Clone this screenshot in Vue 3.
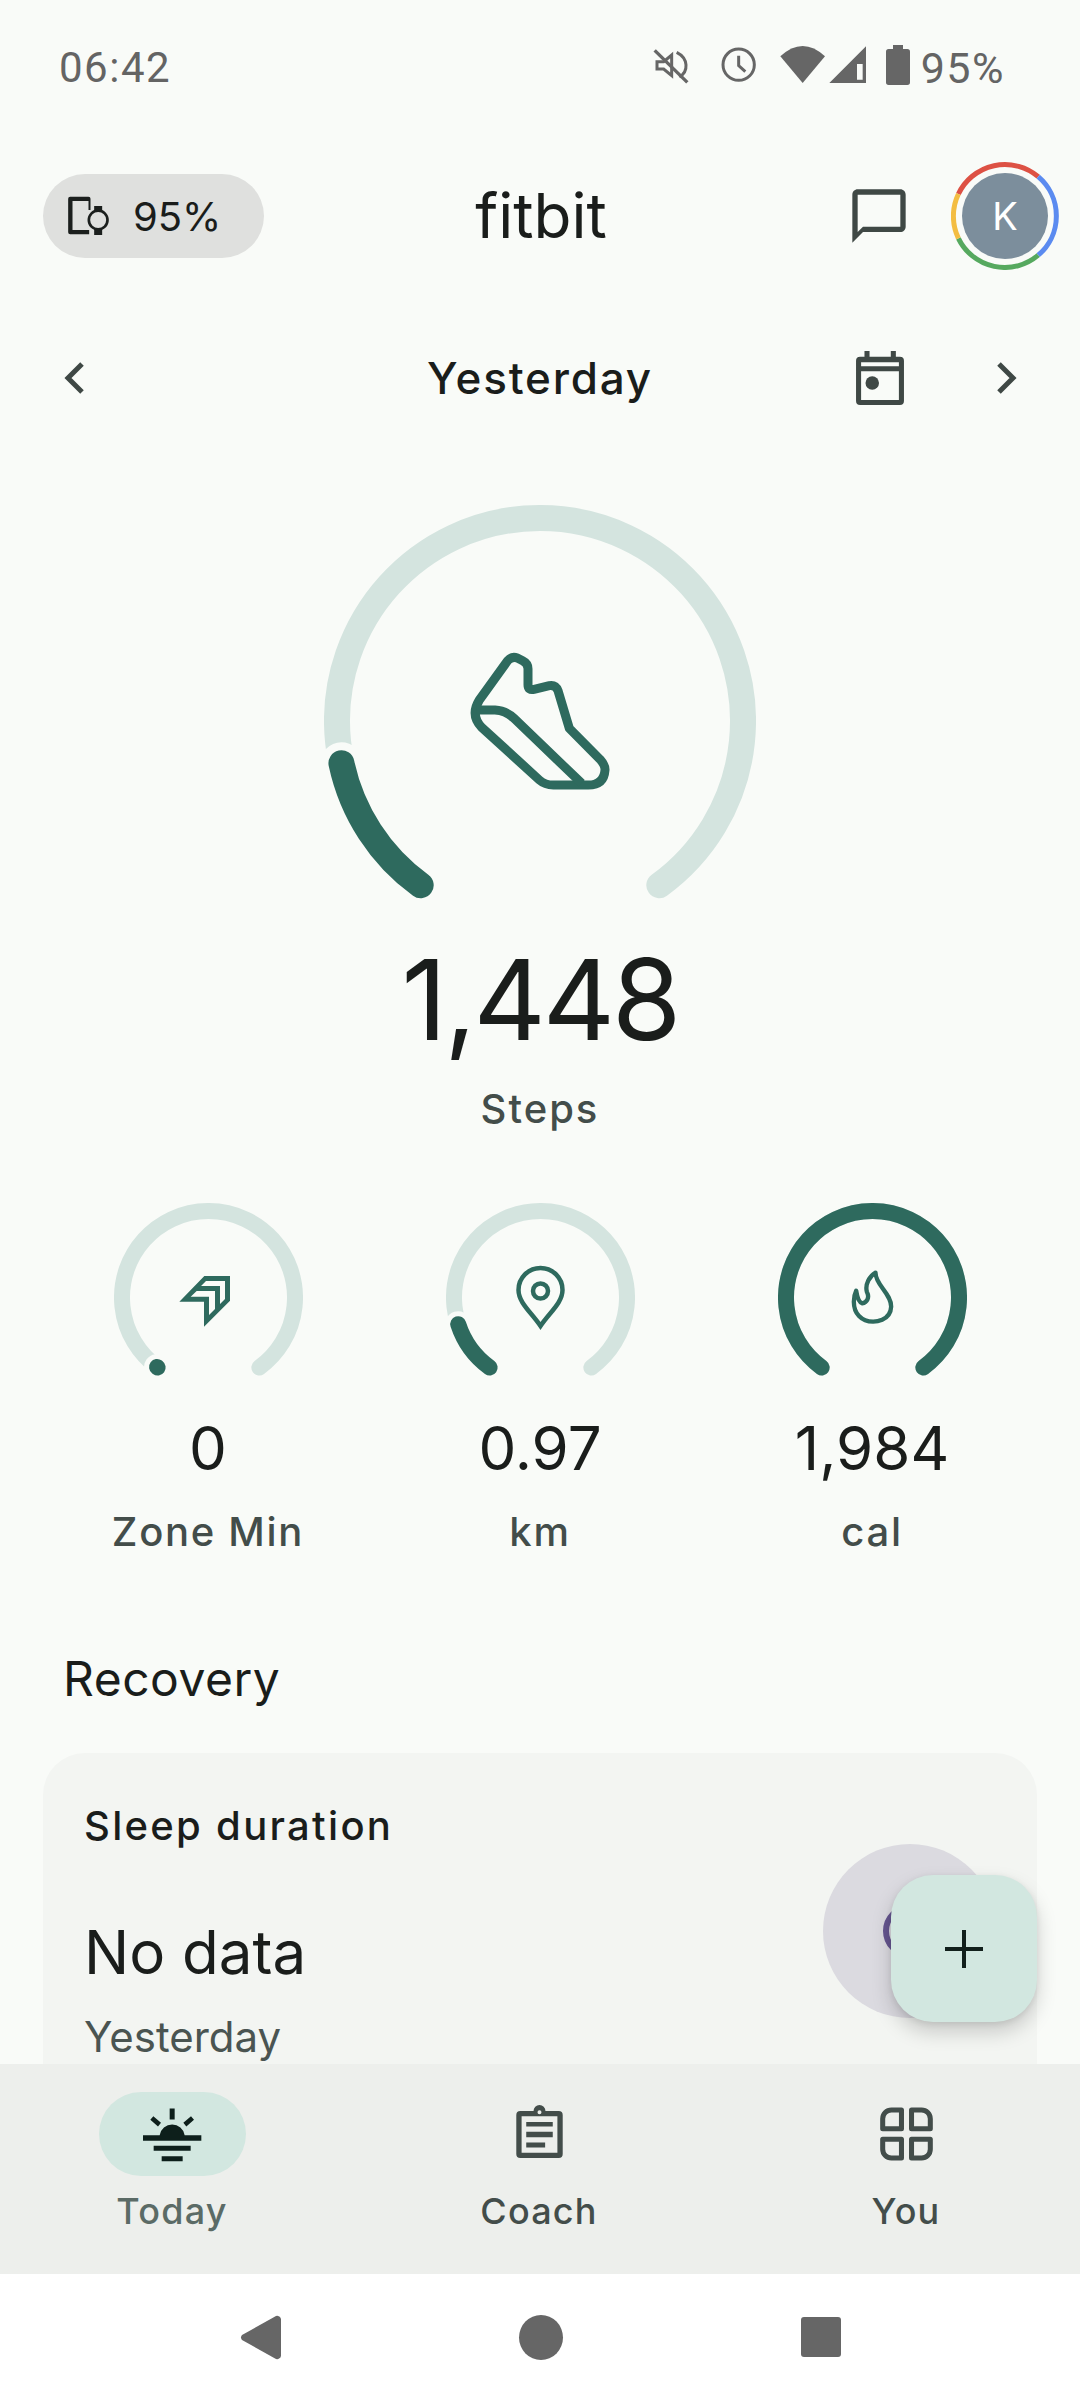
<template>
  <div class="app">
    <main class="main">
      <!-- status bar -->
      <div class="status">
        <span class="time">06:42</span>
        <div class="status-right">
          <svg class="status-icons" width="280" height="60" viewBox="60 60 840 180">
            <g fill="none" stroke="#666" stroke-width="9">
              <path d="M108 128h20l24-20v62l-24-20h-20z" />
              <path d="M167 100c36 18 36 58 8 74" />
              <path d="M101 94l98 96" stroke-width="10" />
              <circle cx="353" cy="137" r="47" />
              <path d="M353 110v30l20 18" />
            </g>
            <g fill="#666">
              <path d="M478 112Q545 50 612 112L545 192z" />
              <path d="M625 192L735 82V192zM708 182h17V135h-17z" fill-rule="evenodd" />
              <path d="M816 78h30v12h13a8 8 0 0 1 8 8v92a8 8 0 0 1-8 8h-56a8 8 0 0 1-8-8V98a8 8 0 0 1 8-8h13z" />
            </g>
          </svg>
          <span class="time pct">95%</span>
        </div>
      </div>

      <!-- app bar -->
      <div class="topbar">
        <div class="left">
          <div class="device">
            <svg width="42" height="40" viewBox="55 50 125 120" fill="#1b1f1d">
              <path d="M61 52h55a6 6 0 0 1 6 6v34h-6V65H68v87h50v13H61a6 6 0 0 1-6-6V58a6 6 0 0 1 6-6z" />
              <path d="M133 80h24v17h-24zM133 148h24v19h-24z" />
              <circle cx="145" cy="122" r="28" fill="none" stroke="#1b1f1d" stroke-width="8" />
            </svg>
            <span>95%</span>
          </div>
        </div>
        <div class="logo">fitbit</div>
        <div class="right">
          <svg width="64" height="64" viewBox="0 0 24 24" fill="#3f4845">
            <path d="M20 2H4c-1.1 0-2 .9-2 2v18l4-4h14c1.1 0 2-.9 2-2V4c0-1.1-.9-2-2-2zm0 14H6l-2 2V4h16v12z" />
          </svg>
          <div class="avatar">
            <svg class="ring" width="108" height="108" viewBox="0 0 108 108" fill="none" stroke-width="5">
              <path d="M7.4 32A51.5 51.5 0 0 1 87.2 14.700" stroke="#dd5144" />
              <path d="M87.200 14.700A51.5 51.500 0 0 1 87.200 93.200" stroke="#5b8bf0" />
              <path d="M87.200 93.200A51.5 51.500 0 0 1 7.400 76.300" stroke="#56a95f" />
              <path d="M7.400 76.300A51.5 51.500 0 0 1 7.400 32" stroke="#f3bd42" />
            </svg>
            <span class="initial">K</span>
          </div>
        </div>
      </div>

      <!-- date row -->
      <div class="daterow">
        <div class="left date-left">
          <svg width="22" height="34" viewBox="0 0 22 34" fill="none" stroke="#3f4845" stroke-width="5">
            <path d="M19 3L5 17l14 14" />
          </svg>
        </div>
        <div class="date">Yesterday</div>
        <div class="right date-right">
          <svg width="48" height="54" viewBox="50 545 142 160" fill="#3f4845">
            <path d="M75 545h15v17h63v-17h15v17h12a12 12 0 0 1 12 12v119a12 12 0 0 1-12 12H62a12 12 0 0 1-12-12V574a12 12 0 0 1 12-12h13zM65 578v12h112v-12zM65 605v85h112v-85z" fill-rule="evenodd" />
            <circle cx="98" cy="640" r="20" />
          </svg>
          <svg width="22" height="34" viewBox="0 0 22 34" fill="none" stroke="#3f4845" stroke-width="5">
            <path d="M3 3l14 14L3 31" />
          </svg>
        </div>
      </div>

      <!-- steps gauge -->
      <div class="hero">
        <svg class="hero-gauge" width="432" height="400" viewBox="0 0 432 400" fill="none">
          <path :d="arc(216, 216, 203, 36, 324)" class="track" stroke-width="26" />
          <path :d="arc(216, 216, 203, 36, 78)" class="halo" stroke-width="42" />
          <path :d="arc(216, 216, 203, 36, 78)" class="bar" stroke-width="26" />
          <svg x="116" y="115" width="200" height="200" viewBox="0 0 600 600">
            <path class="shoe" d="M203 122Q215 108 232 114L248 122Q264 130 264 146V195Q264 212 282 208L328 197Q347 194 354 212L388 325L480 418Q496 436 495 450Q492 495 445 495H340Q315 495 298 480L125 322Q90 285 118 240Z" />
            <path class="shoe" d="M110 270H165Q198 272 222 295L425 490" />
          </svg>
        </svg>
        <div class="steps">1,448</div>
        <div class="steps-label">Steps</div>
      </div>

      <!-- three small gauges -->
      <div class="metrics">
        <div v-for="m in metrics" :key="m.label" class="metric">
          <svg class="metric-gauge" width="189" height="180" viewBox="0 0 189 180" fill="none">
            <path :d="arc(94.5, 94.5, 86.5, 36, 324)" class="track" stroke-width="16" />
            <template v-if="m.to < 324">
              <path :d="arc(94.5, 94.5, 86.5, 36, m.to)" class="halo" stroke-width="26" />
            </template>
            <path :d="arc(94.5, 94.5, 86.5, 36, m.to)" class="bar" stroke-width="16" />

            <svg v-if="m.icon === 'zone'" x="56" y="62" width="80" height="70" viewBox="0 0 240 210">
              <path d="M103 33H180V107L102 185V110H28Z" fill="#2e6a5e" />
              <path d="M108 48H165V102L150 117V63H93ZM80 78H135V132L117 150V95H62Z" fill="#f9fbf8" />
            </svg>
            <g v-else-if="m.icon === 'pin'" stroke="#2e6a5e" stroke-width="4.500">
              <path d="M94.500 123C86 110 72.500 100 72.500 87A22 22 0 0 1 116.500 87C116.500 100 103 110 94.500 123Z" />
              <circle cx="94.500" cy="88" r="7.500" />
            </g>
            <svg v-else x="62.500" y="57" width="70" height="80" viewBox="0 0 210 240">
              <path d="M105 38C105 75 152 100 152 140C150 185 100 185 98 185C62 185 40 160 40 125C40 112 43 100 47 92C50 110 54 128 65 130C80 128 88 112 79 95C73 72 88 48 105 38Z" stroke="#2e6a5e" stroke-width="13" stroke-linejoin="round" />
            </svg>
          </svg>
          <div class="metric-value">{{ m.value }}</div>
          <div class="metric-label">{{ m.label }}</div>
        </div>
      </div>

      <h2 class="section">Recovery</h2>

      <div class="card">
        <div class="card-text">
          <div class="card-title">Sleep duration</div>
          <div class="card-value">No data</div>
          <div class="card-sub">Yesterday</div>
        </div>
        <div class="sleep-disc"><span class="sleep-ring"></span></div>
      </div>
    </main>

    <button class="fab" type="button">
      <svg width="40" height="40" viewBox="0 0 40 40" stroke="#12201c" stroke-width="4">
        <path d="M20 1v38M1 20h38" />
      </svg>
    </button>

    <!-- bottom tabs -->
    <nav class="tabs">
      <div class="tab active">
        <div class="tab-icon pill">
          <svg width="100" height="95" viewBox="7 -4.500 300 285" fill="#0d1f1b">
            <path d="M70 140h50a38 38 0 0 1 75 0h50v17H70zM150 60h15v33h-15zM102 172h111v15H102zM126 203h63v15h-63z" />
            <path d="M101 83l23 20-9 11-23-20zM214 83l-23 20 9 11 23-20z" />
          </svg>
        </div>
        <span>Today</span>
      </div>
      <div class="tab">
        <div class="tab-icon">
          <svg width="47" height="60" viewBox="48 41 140 181" fill="#434d4a">
            <path fill-rule="evenodd" d="M60 62h40a18 18 0 0 1 36 0h40a12 12 0 0 1 12 12v118a12 12 0 0 1-12 12H60a12 12 0 0 1-12-12V74a12 12 0 0 1 12-12zM118 60a6 6 0 1 0 0 12 6 6 0 0 0 0-12zM64 78v110h108V78z" />
            <path d="M78 95h80v14H78zM78 125h80v16H78zM78 157h57v15H78z" />
          </svg>
        </div>
        <span>Coach</span>
      </div>
      <div class="tab">
        <div class="tab-icon">
          <svg width="57" height="57" viewBox="1135 50 170 170" fill="none" stroke="#434d4a" stroke-width="15" stroke-linejoin="round">
            <path d="M1205 62v56h-56v-30a26 26 0 0 1 26-26zM1235 62h30a26 26 0 0 1 26 26v30h-56zM1149 149h56v56h-30a26 26 0 0 1-26-26zM1235 149h56v30a26 26 0 0 1-26 26h-30z" />
          </svg>
        </div>
        <span>You</span>
      </div>
    </nav>

    <!-- android system bar -->
    <div class="sysnav">
      <svg width="41" height="45" viewBox="0 0 41 45" fill="#666">
        <path d="M36 1a4 4 0 0 1 5 3v37a4 4 0 0 1-5 3L2 25a4 4 0 0 1 0-5z" />
      </svg>
      <span class="sys-circle"></span>
      <span class="sys-square"></span>
    </div>
  </div>
</template>

<script setup>
const metrics = [
  { icon: 'zone', value: '0', label: 'Zone Min', to: 36.5 },
  { icon: 'pin', value: '0.97', label: 'km', to: 72 },
  { icon: 'flame', value: '1,984', label: 'cal', to: 324 }
]

// angles run clockwise from straight down
function arc(cx, cy, r, from, to) {
  const pt = (a) => {
    const t = (a * Math.PI) / 180
    return `${(cx - r * Math.sin(t)).toFixed(2)} ${(cy + r * Math.cos(t)).toFixed(2)}`
  }
  const large = to - from > 180 ? 1 : 0
  return `M${pt(from)}A${r} ${r} 0 ${large} 1 ${pt(to)}`
}
</script>

<style>
html, body { margin: 0; background: #f9fbf8; }
</style>

<style scoped>
.app {
  position: relative;
  width: 1080px;
  height: 2400px;
  display: flex;
  flex-direction: column;
  background: #f9fbf8;
  color: #1a1d1b;
  font-family: Inter, "Noto Sans", sans-serif;
  overflow: hidden;
}
.main { flex: 1; min-height: 0; overflow: hidden; }

.status {
  height: 136px;
  display: flex;
  align-items: center;
  justify-content: space-between;
  padding: 0 75px 0 59px;
  box-sizing: border-box;
}
.time { font: 400 42px/50px Roboto, sans-serif; color: #646464; letter-spacing: 1.500px; }
.status-right { display: flex; align-items: center; }
.status-icons { display: block; margin-top: 2px; }
.pct { font-size: 43px; letter-spacing: 1.500px; }

.topbar, .daterow { display: grid; grid-template-columns: 1fr auto 1fr; align-items: center; }
.topbar { height: 160px; padding: 0 21px 0 43px; }
.left { display: flex; align-items: center; }
.right { display: flex; align-items: center; justify-content: flex-end; }
.device {
  width: 221px;
  height: 84px;
  border-radius: 42px;
  background: #dfe0de;
  display: flex;
  align-items: center;
  gap: 23px;
  padding-left: 25px;
  box-sizing: border-box;
  font-size: 40px;
  font-weight: 400;
}
.logo { font-size: 62px; font-weight: 400; line-height: 70px; margin-right: 20px; }
.right > svg { display: block; }
.avatar {
  position: relative;
  width: 108px;
  height: 108px;
  margin-left: 40px;
  display: flex;
  align-items: center;
  justify-content: center;
}
.ring { position: absolute; left: 0; top: 0; }
.initial {
  width: 86px;
  height: 86px;
  border-radius: 50%;
  background: #7c8e9c;
  color: #fff;
  font-size: 38px;
  line-height: 86px;
  text-align: center;
}

.daterow { height: 164px; }
.date-left { padding-left: 63px; }
.date-right { padding-right: 62px; gap: 92px; }
.date { font-size: 44px; font-weight: 500; line-height: 52px; letter-spacing: 1.800px; }

.hero { display: flex; flex-direction: column; align-items: center; margin-top: 45px; }
.hero-gauge { display: block; }
.track { stroke: #d4e4df; stroke-linecap: round; }
.halo { stroke: #f9fbf8; stroke-linecap: round; }
.bar { stroke: #2e6a5e; stroke-linecap: round; }
.shoe { fill: none; stroke: #2e6a5e; stroke-width: 27; stroke-linejoin: round; }
.steps { font-size: 112px; line-height: 130px; margin-top: 29px; font-weight: 400; letter-spacing: -3px; }
.steps-label { font-size: 40px; line-height: 50px; margin-top: 20px; color: #434d4a; font-weight: 500; letter-spacing: 2px; }

.metrics {
  display: grid;
  grid-template-columns: repeat(3, 1fr);
  padding: 0 42px;
  margin-top: 69px;
}
.metric { display: flex; flex-direction: column; align-items: center; }
.metric-gauge { display: block; }
.metric-value { font-size: 60px; line-height: 80px; margin-top: 25px; font-weight: 400; }
.metric-label { font-size: 40px; line-height: 52px; margin-top: 18px; color: #434d4a; font-weight: 500; letter-spacing: 1.700px; }

.section { font-size: 48px; font-weight: 400; line-height: 60px; margin: 91px 0 44px 63px; letter-spacing: .5px; }

.card {
  margin: 0 43px;
  padding: 48px 40px 60px 41px;
  border-radius: 42px;
  background: #f3f5f2;
  display: flex;
  justify-content: space-between;
}
.card-title { font-size: 40px; font-weight: 500; line-height: 50px; letter-spacing: 2.300px; }
.card-value { font-size: 60px; line-height: 76px; margin-top: 63px; }
.card-sub { font-size: 42px; line-height: 54px; margin-top: 20px; color: #4a5451; }
.sleep-disc {
  width: 174px;
  height: 174px;
  margin-top: 43px;
  border-radius: 50%;
  background: #dbdae0;
  display: flex;
  align-items: center;
  justify-content: center;
}
.sleep-ring {
  width: 54px;
  height: 54px;
  box-sizing: border-box;
  border-radius: 50%;
  border: 6px solid #65558f;
}

.fab {
  position: absolute;
  left: 891px;
  top: 1875px;
  width: 146px;
  height: 147px;
  padding: 0;
  border: none;
  border-radius: 42px;
  background: #d2e7e0;
  display: flex;
  align-items: center;
  justify-content: center;
  box-shadow: 0 10px 20px rgba(0, 0, 0, .18), 0 2px 6px rgba(0, 0, 0, .08);
}

.tabs {
  height: 210px;
  background: #edefec;
  display: flex;
  justify-content: space-between;
  padding: 0 74px 0 72px;
  box-sizing: border-box;
  position: relative;
}
.tab {
  width: 200px;
  display: flex;
  flex-direction: column;
  align-items: center;
  font-size: 36px;
  font-weight: 500;
  line-height: 44px;
  letter-spacing: 1.200px;
  color: #434d4a;
}
.tab.active { color: #5b6b66; }
.tab-icon {
  width: 147px;
  height: 84px;
  margin: 28px 0 13px;
  border-radius: 42px;
  display: flex;
  align-items: center;
  justify-content: center;
}
.pill { background: #d2e7e0; }

.sysnav {
  height: 126px;
  background: #fff;
  display: flex;
  align-items: center;
  justify-content: center;
  gap: 238px;
}
.sys-circle { width: 44px; height: 45px; border-radius: 50%; background: #666; }
.sys-square { width: 40px; height: 40px; border-radius: 3px; background: #666; }
</style>
